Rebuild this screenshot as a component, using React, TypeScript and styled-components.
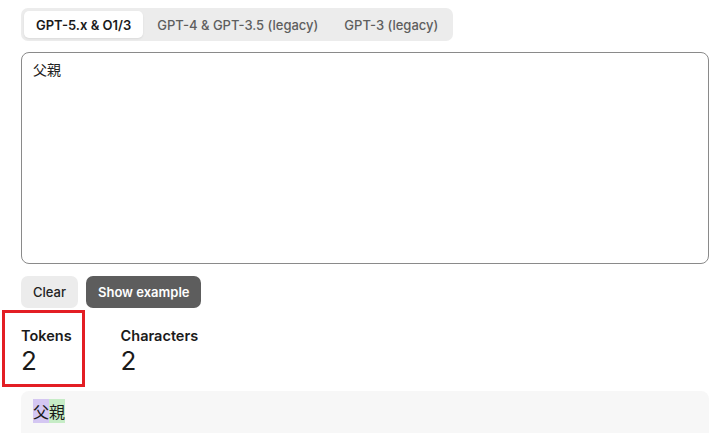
import styled, {createGlobalStyle} from "styled-components";

const GlobalStyle = createGlobalStyle`
    body {
        margin: 0;
        background: #ffffff;
        font-family: Inter, "Noto Sans", sans-serif;
        color: #1a1a1a;
    }
`;

const Page = styled.div`
    padding: 8px 8px 0 21px;
    display: flex;
    flex-direction: column;
`;

const TabGroup = styled.div`
    display: inline-flex;
    align-self: flex-start;
    background: #ececec;
    border-radius: 7px;
    padding: 3px;
    gap: 2px;
`;

const Tab = styled.button<{ $active?: boolean }>`
    border: none;
    background: ${(p) => (p.$active ? "#ffffff" : "transparent")};
    color: ${(p) => (p.$active ? "#1a1a1a" : "#5e5e5e")};
    box-shadow: ${(p) => (p.$active ? "0 1px 2px rgba(0,0,0,0.08)" : "none")};
    font-family: Inter, sans-serif;
    font-size: 13px;
    font-weight: ${(p) => (p.$active ? 600 : 500)};
    height: 27px;
    padding: 0 12px;
    border-radius: 5px;
    cursor: pointer;
`;

const TextArea = styled.textarea`
    margin-top: 11px;
    width: 688px;
    height: 212px;
    box-sizing: border-box;
    border: 1px solid #8a8a8a;
    border-radius: 8px;
    padding: 6px 11px;
    font-family: "Noto Sans CJK JP", sans-serif;
    font-size: 14px;
    color: #222;
    resize: none;
    outline: none;
`;

const ButtonRow = styled.div`
    display: flex;
    gap: 8px;
    margin-top: 12px;
`;

const Button = styled.button<{ $dark?: boolean }>`
    border: none;
    height: 32px;
    padding: 0 12px;
    border-radius: 7px;
    font-family: Inter, sans-serif;
    font-size: 13px;
    font-weight: ${(p) => (p.$dark ? 600 : 500)};
    background: ${(p) => (p.$dark ? "#5d5d5d" : "#ececec")};
    color: ${(p) => (p.$dark ? "#ffffff" : "#222")};
    cursor: pointer;
`;

const StatsRow = styled.div`
    display: flex;
    gap: 49px;
    margin-top: 19px;
`;

const Stat = styled.div<{ $marked?: boolean }>`
    position: relative;
    display: flex;
    flex-direction: column;

    ${(p) =>
            p.$marked &&
            `
        &::after {
            content: "";
            position: absolute;
            left: -19px;
            top: -17px;
            width: 83px;
            height: 77px;
            box-sizing: border-box;
            border: 3px solid #e31e24;
        }
    `}
`;

const StatLabel = styled.div`
    font-size: 14.5px;
    font-weight: 600;
    line-height: 17px;
`;

const StatValue = styled.div`
    font-size: 26px;
    font-weight: 400;
    line-height: 32px;
    margin-top: 1px;
`;

const Output = styled.div`
    margin-top: 14px;
    width: 688px;
    height: 60px;
    box-sizing: border-box;
    background: #f7f7f7;
    border-radius: 8px;
    padding: 10px 12px;
    font-family: "Noto Sans CJK JP", sans-serif;
    font-size: 16px;
    line-height: 20px;
`;

const TokenChip = styled.span<{ $color: string }>`
    background: ${(p) => p.$color};
`;

const tokens = [
  {text: "父", color: "#d4c7f2"},
  {text: "親", color: "#c6ecc6"},
];

export default function App() {
  return (
    <>
      <GlobalStyle/>
      <Page>
        <TabGroup>
          <Tab $active>GPT-5.x &amp; O1/3</Tab>
          <Tab>GPT-4 &amp; GPT-3.5 (legacy)</Tab>
          <Tab>GPT-3 (legacy)</Tab>
        </TabGroup>
        <TextArea defaultValue="父親"/>
        <ButtonRow>
          <Button>Clear</Button>
          <Button $dark>Show example</Button>
        </ButtonRow>
        <StatsRow>
          <Stat $marked>
            <StatLabel>Tokens</StatLabel>
            <StatValue>2</StatValue>
          </Stat>
          <Stat>
            <StatLabel>Characters</StatLabel>
            <StatValue>2</StatValue>
          </Stat>
        </StatsRow>
        <Output>
          {tokens.map((t, i) => (
            <TokenChip key={i} $color={t.color}>{t.text}</TokenChip>
          ))}
        </Output>
      </Page>
    </>
  );
}
